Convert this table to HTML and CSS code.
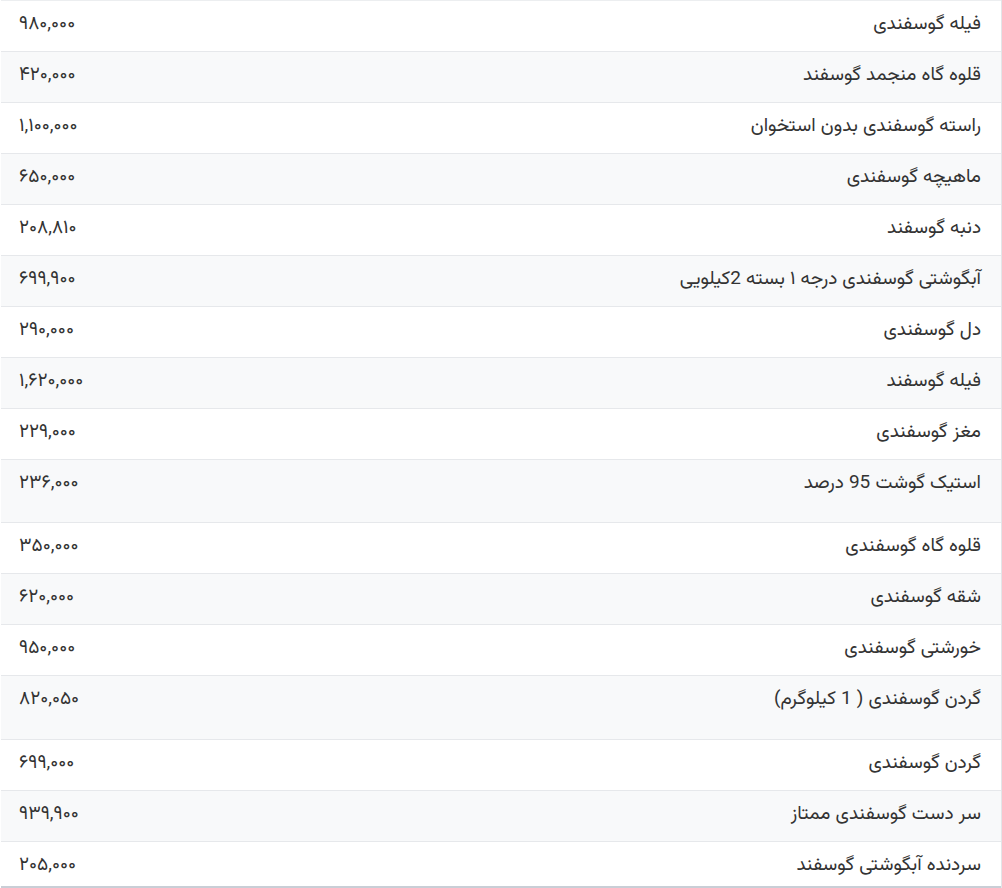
FILE: index.html
```html
<!DOCTYPE html>
<html lang="fa" dir="rtl">
<head>
<meta charset="utf-8">
<title>قیمت گوشت گوسفندی</title>
<link rel="stylesheet" href="styles.css">
</head>
<body>
<div class="wrap">
<table class="prices">
<tbody>
<tr><td class="name">فیله گوسفندی</td><td class="price">۹۸۰,۰۰۰</td></tr>
<tr><td class="name">قلوه گاه منجمد گوسفند</td><td class="price">۴۲۰,۰۰۰</td></tr>
<tr><td class="name">راسته گوسفندی بدون استخوان</td><td class="price">۱,۱۰۰,۰۰۰</td></tr>
<tr><td class="name">ماهیچه گوسفندی</td><td class="price">۶۵۰,۰۰۰</td></tr>
<tr><td class="name">دنبه گوسفند</td><td class="price">۲۰۸,۸۱۰</td></tr>
<tr><td class="name">آبگوشتی گوسفندی درجه ۱ بسته 2کیلویی</td><td class="price">۶۹۹,۹۰۰</td></tr>
<tr><td class="name">دل گوسفندی</td><td class="price">۲۹۰,۰۰۰</td></tr>
<tr><td class="name">فیله گوسفند</td><td class="price">۱,۶۲۰,۰۰۰</td></tr>
<tr><td class="name">مغز گوسفندی</td><td class="price">۲۲۹,۰۰۰</td></tr>
<tr class="tall"><td class="name">استیک گوشت 95 درصد</td><td class="price">۲۳۶,۰۰۰</td></tr>
<tr><td class="name">قلوه گاه گوسفندی</td><td class="price">۳۵۰,۰۰۰</td></tr>
<tr><td class="name">شقه گوسفندی</td><td class="price">۶۲۰,۰۰۰</td></tr>
<tr><td class="name">خورشتی گوسفندی</td><td class="price">۹۵۰,۰۰۰</td></tr>
<tr class="tall2"><td class="name">گردن گوسفندی ( 1 کیلوگرم)</td><td class="price">۸۲۰,۰۵۰</td></tr>
<tr><td class="name">گردن گوسفندی</td><td class="price">۶۹۹,۰۰۰</td></tr>
<tr><td class="name">سر دست گوسفندی ممتاز</td><td class="price">۹۳۹,۹۰۰</td></tr>
<tr class="last"><td class="name">سردنده آبگوشتی گوسفند</td><td class="price">۲۰۵,۰۰۰</td></tr>
</tbody>
</table>
</div>
</body>
</html>
```
FILE: styles.css
```css
html, body {
  margin: 0;
  padding: 0;
  background: #ffffff;
}
body {
  font-family: "Vazirmatn", "Vazir", "Noto Sans Arabic", "DejaVu Sans", sans-serif;
  color: #333333;
  font-size: 19px;
}
.wrap {
  width: 1000px;
  height: 888px;
  overflow: hidden;
  border-right: 1px solid #e3e5e8;
}
.prices {
  width: 100%;
  border-collapse: collapse;
  border-top: 1px solid #eceef0;
}
.prices tr {
  height: 51px;
  border-bottom: 1px solid #e6e8eb;
}
.prices tr:nth-child(even) {
  background: #f8f9fa;
}
.prices tr.tall {
  height: 63px;
}
.prices tr.tall2 {
  height: 64px;
}
.prices tr.last {
  height: 45px;
  border-bottom: 2px solid #c9ced6;
}
.prices td {
  padding: 0;
  vertical-align: top;
  line-height: 22px;
  padding-top: 13px;
}
.name {
  text-align: right;
  padding-right: 20px !important;
}
.price {
  text-align: left;
  padding-left: 18px !important;
  width: 200px;
}
```
